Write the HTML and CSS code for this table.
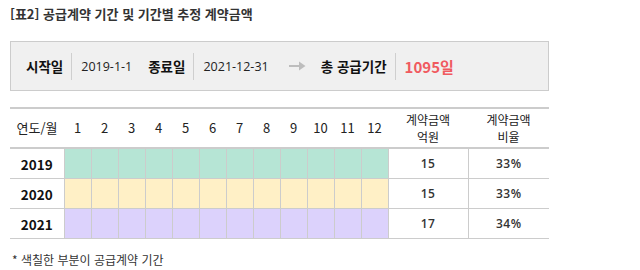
FILE: index.html
```html
<!DOCTYPE html>
<html lang="ko">
<head>
<meta charset="utf-8">
<link rel="stylesheet" href="styles.css">
</head>
<body>
<div class="page">
  <h2 class="title">[표2] 공급계약 기간 및 기간별 추정 계약금액</h2>
  <div class="summary">
    <span class="label">시작일</span>
    <span class="sep"></span>
    <span class="val">2019-1-1</span>
    <span class="label gap">종료일</span>
    <span class="sep"></span>
    <span class="val">2021-12-31</span>
    <svg class="arrow" width="17" height="12" viewBox="0 0 17 12"><path d="M0 5h10V1.5L16.5 6L10 10.5V7H0z" fill="#bdbdbd"/></svg>
    <span class="label">총 공급기간</span>
    <span class="sep"></span>
    <span class="total">1095일</span>
  </div>
  <table class="grid">
    <colgroup>
      <col class="c-year">
      <col class="c-m"><col class="c-m"><col class="c-m"><col class="c-m"><col class="c-m"><col class="c-m">
      <col class="c-m"><col class="c-m"><col class="c-m"><col class="c-m"><col class="c-m"><col class="c-m">
      <col class="c-amt">
      <col class="c-rate">
    </colgroup>
    <thead>
      <tr>
        <th>연도/월</th>
        <th>1</th><th>2</th><th>3</th><th>4</th><th>5</th><th>6</th>
        <th>7</th><th>8</th><th>9</th><th>10</th><th>11</th><th>12</th>
        <th class="two"><span class="ln">계약금액</span><span class="ln">억원</span></th>
        <th class="two"><span class="ln">계약금액</span><span class="ln">비율</span></th>
      </tr>
    </thead>
    <tbody>
      <tr class="y2019">
        <td class="year">2019</td>
        <td></td><td></td><td></td><td></td><td></td><td></td>
        <td></td><td></td><td></td><td></td><td></td><td></td>
        <td class="num">15</td><td class="num">33%</td>
      </tr>
      <tr class="y2020">
        <td class="year">2020</td>
        <td></td><td></td><td></td><td></td><td></td><td></td>
        <td></td><td></td><td></td><td></td><td></td><td></td>
        <td class="num">15</td><td class="num">33%</td>
      </tr>
      <tr class="y2021">
        <td class="year">2021</td>
        <td></td><td></td><td></td><td></td><td></td><td></td>
        <td></td><td></td><td></td><td></td><td></td><td></td>
        <td class="num">17</td><td class="num">34%</td>
      </tr>
    </tbody>
  </table>
  <p class="note">* 색칠한 부분이 공급계약 기간</p>
</div>
</body>
</html>
```

FILE: styles.css
```css
html, body {
  margin: 0;
  padding: 0;
  background: #fff;
}
body {
  font-family: "Noto Sans CJK KR", "Noto Sans", sans-serif;
  color: #222;
}
.page {
  padding: 5px 10px 0 10px;
  width: 539px;
}
.title {
  margin: 0;
  font-size: 13px;
  line-height: 18px;
  font-weight: 700;
  color: #333;
}
.summary {
  margin-top: 18px;
  box-sizing: border-box;
  height: 50px;
  border: 1px solid #cccccc;
  background: #f0f0f0;
  display: flex;
  align-items: center;
  padding-left: 15px;
}
.label {
  font-size: 13.5px;
  font-weight: 700;
  color: #111;
}
.label.gap { margin-left: 16px; }
.sep {
  width: 1px;
  height: 27px;
  background: #cfcfcf;
  margin: 0 9px 0 8px;
}
.val {
  font-family: "Open Sans", "Noto Sans", sans-serif;
  font-size: 12.5px;
  color: #222;
}
.arrow {
  margin: 0 15px 0 20px;
}
.total {
  font-size: 15px;
  font-weight: 700;
  color: #f05a5f;
}
.grid {
  margin-top: 16px;
  width: 539px;
  table-layout: fixed;
  border-collapse: collapse;
}
.c-year { width: 54px; }
.c-m { width: 27px; }
.c-amt { width: 80px; }
.c-rate { width: 81px; }
.grid thead tr {
  border-top: 2px solid #cccccc;
  border-bottom: 2px solid #cccccc;
}
.grid th {
  height: 38px;
  padding: 0;
  font-weight: 400;
  font-size: 13px;
  line-height: 16px;
  color: #222;
  text-align: center;
}
.grid th.two {
  font-size: 12px;
  line-height: 17.5px;
}
.ln { display: block; }
.grid td {
  height: 29px;
  padding: 0;
  border: 1px solid #cccccc;
  text-align: center;
}
.grid td:first-child { border-left: none; }
.grid td:last-child { border-right: none; }
.y2019 td { background: #b6e5d5; }
.y2020 td { background: #fff0c6; }
.y2021 td { background: #dcd2fc; }
.grid td.year,
.grid td.num { background: #fff; }
.year {
  font-size: 13.5px;
  font-weight: 700;
  color: #111;
}
.num {
  font-family: "Open Sans", "Noto Sans", sans-serif;
  font-size: 12px;
  font-weight: 600;
  color: #333;
  letter-spacing: 0.5px;
}
.note {
  margin: 12px 0 0 2px;
  font-size: 12px;
  color: #333;
}
```
